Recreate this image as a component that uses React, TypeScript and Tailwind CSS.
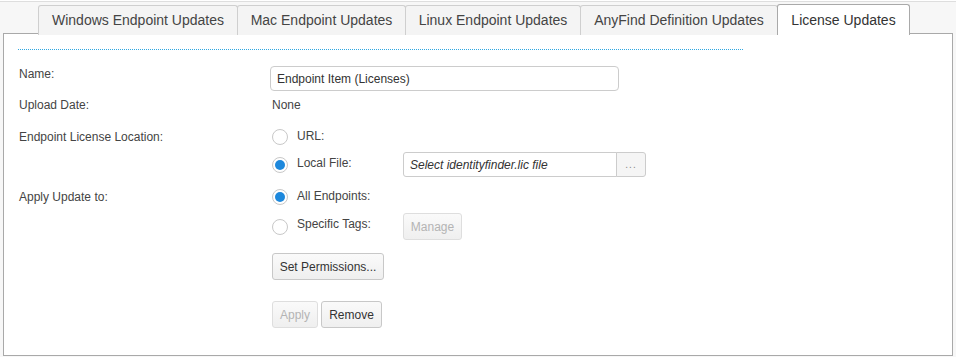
import React from 'react';

const tabs = [
  { label: 'Windows Endpoint Updates', w: 'w-[200px]' },
  { label: 'Mac Endpoint Updates', w: 'w-[169px]' },
  { label: 'Linux Endpoint Updates', w: 'w-[176px]' },
  { label: 'AnyFind Definition Updates', w: 'w-[198px]' },
  { label: 'License Updates', w: 'w-[133px]', active: true },
];

function Radio({ checked }: { checked?: boolean }) {
  return (
    <span className="w-4 h-4 rounded-full border border-[#c8c8c8] bg-white flex items-center justify-center shrink-0">
      {checked && <span className="w-[10px] h-[10px] rounded-full bg-[#1d88dc]" />}
    </span>
  );
}

function Button({
  children,
  disabled,
  className = '',
}: {
  children: React.ReactNode;
  disabled?: boolean;
  className?: string;
}) {
  return (
    <button
      className={`h-[27px] px-0 whitespace-nowrap rounded-[3px] border text-[12px] bg-gradient-to-b from-[#fafafa] to-[#efefef] ${
        disabled ? 'border-[#dedede] text-[#b4b4b4]' : 'border-[#c8c8c8] text-[#333]'
      } ${className}`}
    >
      {children}
    </button>
  );
}

export default function App() {
  return (
    <div
      className="w-[956px] h-[357px] bg-[#f7f7f7] text-[#444] overflow-hidden"
      style={{ fontFamily: '"Liberation Sans", Arial, sans-serif' }}
    >
      <div className="h-[1px] bg-white" />
      <div className="h-[1px] bg-[#dedede]" />
      <div className="flex pl-[38px] pt-[2px] h-[32px]">
        {tabs.map((t) => (
          <div
            key={t.label}
            className={`${t.w} -ml-px first:ml-0 h-[30px] rounded-t-[3px] border border-b-0 flex items-center justify-center text-[14px] ${
              t.active
                ? 'bg-white border-[#a9a9a9] h-[31px] relative z-10 text-[#333]'
                : 'bg-[#f4f4f4] border-[#cfcfcf] text-[#444] mt-px'
            }`}
          >
            {t.label}
          </div>
        ))}
      </div>
      <div className="mx-[3px] -mt-px h-[323px] bg-white border border-[#a9a9a9] text-[12px]">
        <div className="pt-[15px] pl-[14px]">
          <div className="w-[725px] border-t border-dotted border-[#2ea7e2]" />
        </div>

        <div className="pl-[15px] pt-[16px] flex flex-col">
          {/* Name */}
          <div className="flex items-start h-[25px]">
            <div className="w-[251px] pt-[1px] leading-[14px]">Name:</div>
            <div className="w-[349px] h-[25px] border border-[#cccccc] rounded-[4px] flex items-center px-[6px] text-[#333]">
              Endpoint Item (Licenses)
            </div>
          </div>

          {/* Upload date */}
          <div className="flex mt-[7px] h-[14px] leading-[14px]">
            <div className="w-[251px]">Upload Date:</div>
            <div className="pl-[2px]">None</div>
          </div>

          {/* Location */}
          <div className="flex mt-[17px]">
            <div className="w-[251px] leading-[16px]">Endpoint License Location:</div>
            <div className="flex flex-col pl-[2px]">
              <div className="flex items-center h-4 gap-[9px]">
                <Radio />
                <span className="leading-[14px] -mt-[2px]">URL:</span>
              </div>
              <div className="flex items-center h-[25px] mt-[7px]">
                <Radio checked />
                <span className="w-[115px] pl-[9px] -mt-[4px]">Local File:</span>
                <div className="flex h-[25px]">
                  <div className="w-[214px] h-[25px] border border-[#cccccc] rounded-l-[3px] flex items-center px-[6px] italic text-[#333]">
                    Select identityfinder.lic file
                  </div>
                  <div className="w-[30px] h-[25px] -ml-px border border-[#cccccc] rounded-r-[3px] bg-[#f5f5f5] flex items-center justify-center text-[#888] text-[10px] tracking-[1px]">
                    ...
                  </div>
                </div>
              </div>
            </div>
          </div>

          {/* Apply update to */}
          <div className="flex mt-[12px]">
            <div className="w-[251px] leading-[16px]">Apply Update to:</div>
            <div className="flex flex-col pl-[2px]">
              <div className="flex items-center h-4 gap-[9px]">
                <Radio checked />
                <span className="leading-[14px] -mt-[2px]">All Endpoints:</span>
              </div>
              <div className="flex items-center h-[27px] mt-[8px]">
                <Radio />
                <span className="w-[115px] pl-[9px] -mt-[5px]">Specific Tags:</span>
                <Button disabled className="w-[59px]">
                  Manage
                </Button>
              </div>
              <div className="mt-[13px]">
                <Button className="w-[112px]">Set Permissions...</Button>
              </div>
              <div className="flex gap-[3px] mt-[21px]">
                <Button disabled className="w-[46px]">
                  Apply
                </Button>
                <Button className="w-[61px]">Remove</Button>
              </div>
            </div>
          </div>
        </div>
      </div>
    </div>
  );
}
